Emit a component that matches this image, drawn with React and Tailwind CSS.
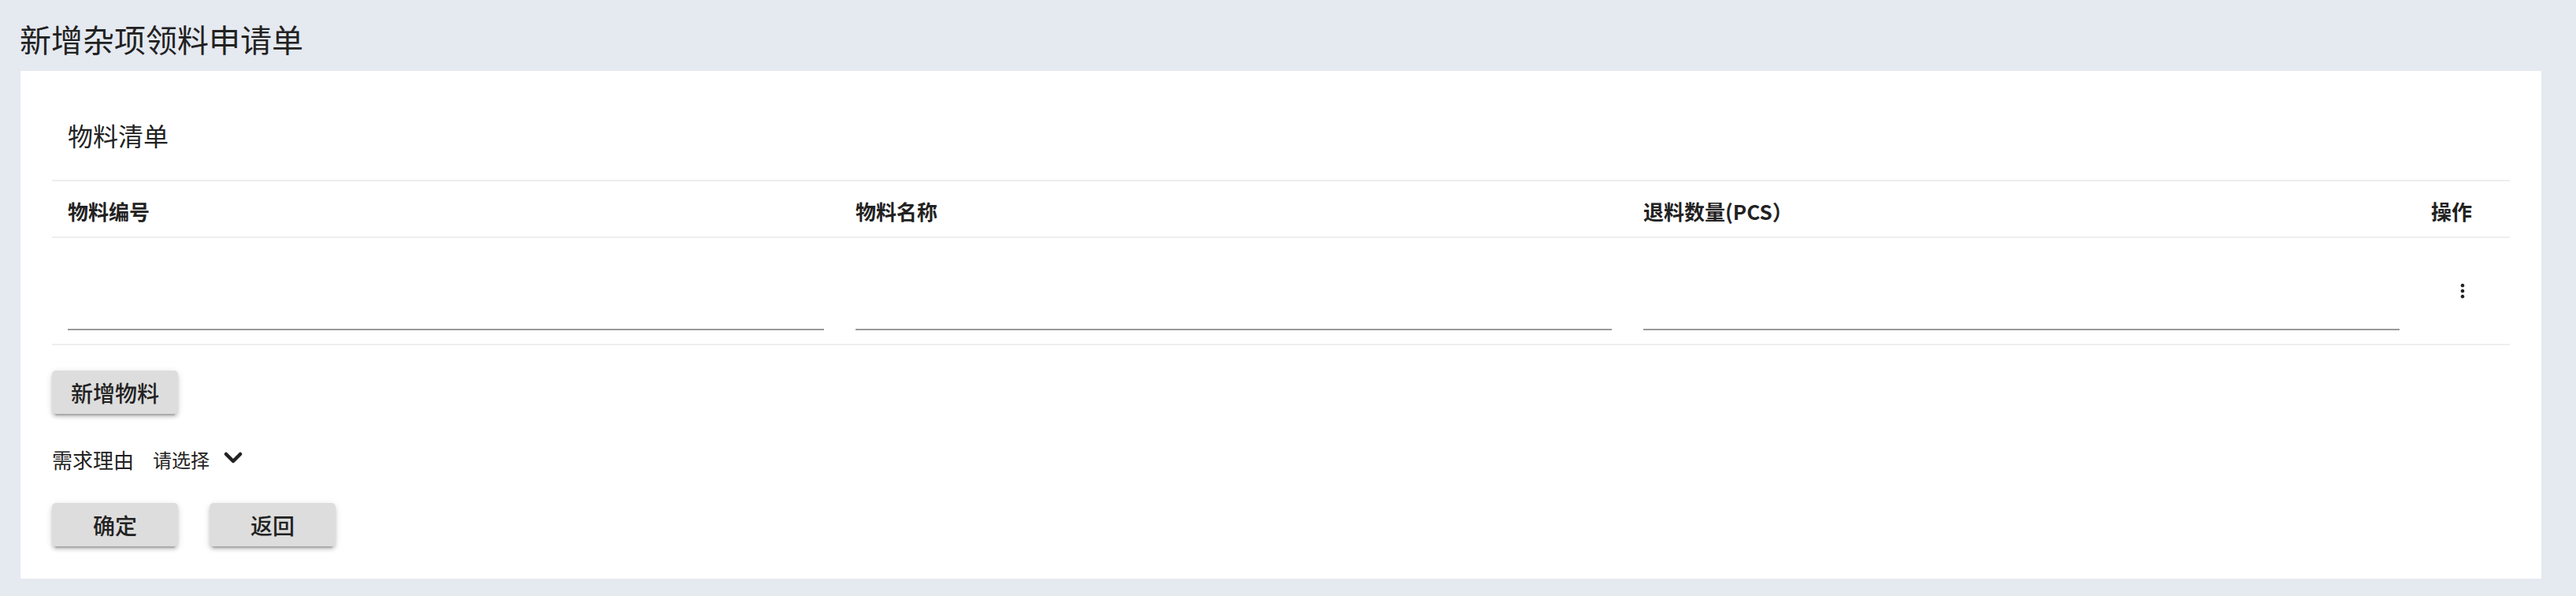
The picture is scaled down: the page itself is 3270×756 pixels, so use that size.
export default function App() {
  const columns = ["物料编号", "物料名称", "退料数量(PCS）", "操作"];

  return (
    <div
      className="min-h-[756px] w-[3270px] bg-[#e5e9f0] text-[#222]"
      style={{ fontFamily: '"Noto Sans CJK SC", "Noto Sans", sans-serif' }}
    >
      <div className="h-[90px] pl-[25px] pt-[21px]">
        <h1 className="text-[40px] font-normal leading-[56px]">新增杂项领料申请单</h1>
      </div>

      <section className="ml-[26px] w-[3200px] bg-white px-[40px] pb-[41px]">
        <div className="border-b-2 border-[#eeeeee] pb-[33px] pl-[20px] pt-[57px]">
          <h2 className="text-[32px] font-normal leading-[48px]">物料清单</h2>
        </div>

        <div className="grid grid-cols-[1000px_1000px_1000px_120px] border-b-2 border-[#eeeeee]">
          {columns.map((col) => (
            <div key={col} className="px-[20px] pb-[12px] pt-[18px] text-[26px] font-bold leading-[40px]">
              {col}
            </div>
          ))}
        </div>

        <div className="grid grid-cols-[1000px_1000px_1000px_120px] border-b-2 border-[#eeeeee]">
          {[0, 1, 2].map((i) => (
            <div key={i} className="px-[20px] pb-[17px] pt-[57px]">
              <input
                type="text"
                className="block h-[60px] w-full border-b-2 border-[#9a9a9a] bg-transparent text-[26px] outline-none"
              />
            </div>
          ))}
          <div className="flex items-center justify-center">
            <svg width="28" height="28" viewBox="0 0 24 24" fill="#222">
              <path d="M12 8c1.1 0 2-.9 2-2s-.9-2-2-2-2 .9-2 2 .9 2 2 2zm0 2c-1.1 0-2 .9-2 2s.9 2 2 2 2-.9 2-2-.9-2-2-2zm0 6c-1.1 0-2 .9-2 2s.9 2 2 2 2-.9 2-2-.9-2-2-2z" />
            </svg>
          </div>
        </div>

        <button
          type="button"
          className="mt-[32px] h-[55px] w-[160px] rounded-[5px] bg-[#dddddd] text-[28px] font-medium leading-none text-[#222] shadow-[0_6px_2px_-4px_rgba(0,0,0,0.2),0_4px_4px_0_rgba(0,0,0,0.14),0_2px_10px_0_rgba(0,0,0,0.12)]"
        >
          新增物料
        </button>

        <div className="mt-[38px] flex items-center leading-[40px]">
          <span className="text-[26px]">需求理由</span>
          <span className="ml-[24px] text-[24px]">请选择</span>
          <svg className="ml-[18px] mt-[-4px]" width="24" height="16" viewBox="0 0 24 16" fill="none">
            <polyline points="3,3 12,12 21,3" stroke="#222" strokeWidth="4.5" strokeLinecap="round" strokeLinejoin="round" />
          </svg>
        </div>

        <div className="mt-[35px] flex gap-[40px]">
          {["确定", "返回"].map((label) => (
            <button
              key={label}
              type="button"
              className="h-[55px] w-[160px] rounded-[5px] bg-[#dddddd] text-[28px] font-medium leading-none text-[#222] shadow-[0_6px_2px_-4px_rgba(0,0,0,0.2),0_4px_4px_0_rgba(0,0,0,0.14),0_2px_10px_0_rgba(0,0,0,0.12)]"
            >
              {label}
            </button>
          ))}
        </div>
      </section>
    </div>
  );
}
